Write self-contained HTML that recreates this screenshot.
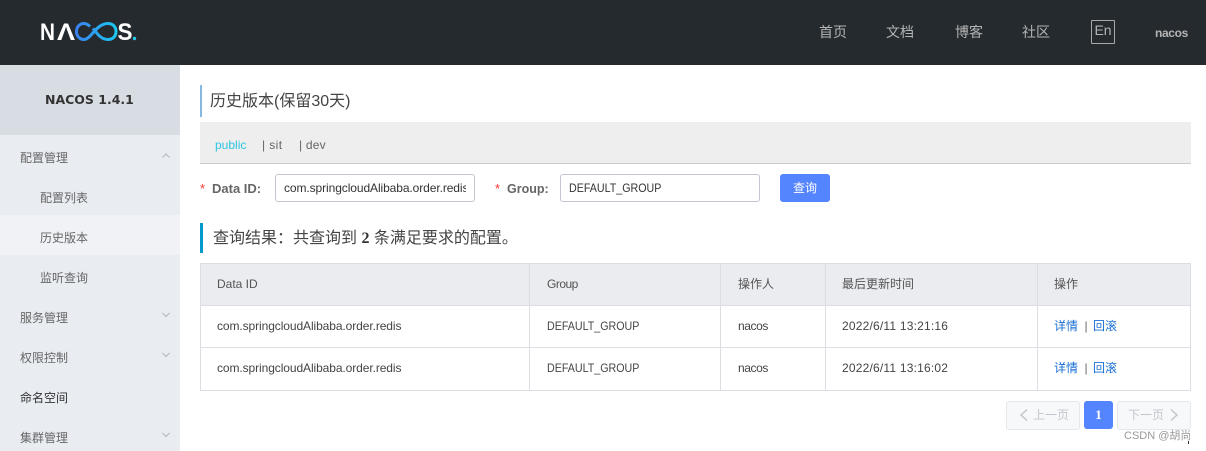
<!DOCTYPE html>
<html><head><meta charset="utf-8"><style>
html,body{margin:0;padding:0;width:1206px;height:451px;overflow:hidden;background:#fff}
body{position:relative;font-family:"Liberation Sans","Noto Sans CJK SC",sans-serif;font-size:12px;color:#666}
.a{position:absolute}
.t{position:absolute;white-space:nowrap;line-height:20px}
.cn{font-size:12px;color:#666}
.nav{font-size:14px;color:#b4b4b4;top:22px}
.dk{color:#444}
.ln{position:absolute;background:#dcdee3}
.link{color:#1a6fd4}
.sx{transform:scaleX(.89);transform-origin:0 50%}
.id{letter-spacing:-.09px}
</style></head><body>
<div class="a" style="left:0;top:0;width:1206px;height:65px;background:#252a2f"></div>
<svg class="a" style="left:36px;top:16px" width="110" height="32" viewBox="0 0 110 32">
<defs><linearGradient id="g" x1="0" x2="1" y1="0" y2="0"><stop offset="0" stop-color="#3b82f0"/><stop offset="1" stop-color="#1bc8f0"/></linearGradient></defs>
<text x="4" y="24" font-family="Liberation Sans" font-weight="700" font-size="24.500" fill="#fff" textLength="15" lengthAdjust="spacingAndGlyphs">N</text>
<text x="21" y="24" font-family="Liberation Sans" font-weight="700" font-size="24.500" fill="#fff" textLength="18" lengthAdjust="spacingAndGlyphs">Λ</text>
<path d="M54 10.500C52 8.500 50 7.500 48 7.500C43.500 7.500 40.500 11 40.500 15.500C40.500 20 43.500 23.500 48 23.500C55 23.500 60 7.500 72 7.500C77 7.500 80 11 80 15.500C80 20 77 23.500 72 23.500C65 23.500 62 18.500 57 12.500" fill="none" stroke="url(#g)" stroke-width="3"/>
<text x="81.500" y="24" font-family="Liberation Sans" font-weight="700" font-size="24.500" fill="#fff" textLength="15" lengthAdjust="spacingAndGlyphs">S</text>
<circle cx="98.500" cy="22.500" r="1.700" fill="#27c8e8"/>
</svg>
<div class="t nav" style="left:819px">首页</div>
<div class="t nav" style="left:886px">文档</div>
<div class="t nav" style="left:955px">博客</div>
<div class="t nav" style="left:1022px">社区</div>
<div class="a" style="left:1091px;top:20px;width:22px;height:22px;border:1px solid #a8a8a8;border-radius:1px;color:#b4b4b4;font-size:14px;line-height:19px;text-align:center">En</div>
<div class="t" style="left:1155px;top:23px;color:#b4b4b4;font-size:12px;font-weight:700;letter-spacing:-.35px">nacos</div>

<div class="a" style="left:0;top:65px;width:180px;height:386px;background:#e9ecf1"></div>
<div class="a" style="left:0;top:65px;width:180px;height:70px;background:#d8dde4"></div>
<div class="t" style="left:45px;top:90px;font-family:'DejaVu Sans';font-weight:700;font-size:12.500px;color:#333">NACOS 1.4.1</div>
<div class="a" style="left:0;top:215px;width:180px;height:40px;background:#f0f2f6"></div>
<div class="t cn" style="left:20px;top:148px">配置管理</div>
<div class="t cn" style="left:40px;top:188px">配置列表</div>
<div class="t cn" style="left:40px;top:228px">历史版本</div>
<div class="t cn" style="left:40px;top:268px">监听查询</div>
<div class="t cn" style="left:20px;top:308px">服务管理</div>
<div class="t cn" style="left:20px;top:348px">权限控制</div>
<div class="t cn" style="left:20px;top:388px;color:#333">命名空间</div>
<div class="t cn" style="left:20px;top:428px">集群管理</div>
<svg class="a" style="left:0;top:140px" width="180" height="311" fill="none" stroke="#b0b5bd" stroke-width="1">
<path d="M162.500 17.500L166 14L169.500 17.500"/>
<path d="M162.500 173L166 176.500L169.500 173"/>
<path d="M162.500 213L166 216.500L169.500 213"/>
<path d="M162.500 293L166 296.500L169.500 293"/>
</svg>

<div class="a" style="left:200px;top:85px;width:2px;height:32px;background:#88b7e0"></div>
<div class="t" style="left:210px;top:92px;font-size:16px;color:#444">历史版本(保留30天)</div>
<div class="a" style="left:200px;top:122px;width:991px;height:41px;background:#eee;border-bottom:1px solid #ccc"></div>
<div class="t" style="left:215px;top:135px;color:#2cc3e0">public</div>
<div class="t" style="left:262px;top:135px;color:#666;letter-spacing:.4px">| sit</div>
<div class="t" style="left:299px;top:135px;color:#666;letter-spacing:.2px">| dev</div>

<div class="t" style="left:200px;top:179px;color:#f33;font-size:13px">*</div>
<div class="t" style="left:212px;top:179px;font-weight:700;color:#666;font-size:13px">Data ID:</div>
<div class="a" style="left:275px;top:174px;width:198px;height:26px;border:1px solid #c4c6cf;border-radius:3px;background:#fff"></div>
<div class="a id" style="left:284px;top:175px;width:182px;height:26px;overflow:hidden;line-height:26px;white-space:nowrap;color:#333">com.springcloudAlibaba.order.redis</div>
<div class="t" style="left:495px;top:179px;color:#f33;font-size:13px">*</div>
<div class="t" style="left:507px;top:179px;font-weight:700;color:#666;font-size:12.500px">Group:</div>
<div class="a" style="left:560px;top:174px;width:198px;height:26px;border:1px solid #c4c6cf;border-radius:3px;background:#fff"></div>
<div class="t sx" style="left:569px;top:178px;color:#333">DEFAULT_GROUP</div>
<div class="a" style="left:780px;top:174px;width:50px;height:28px;background:#5584ff;border-radius:3px;color:#fff;text-align:center;line-height:28px">查询</div>

<div class="a" style="left:200px;top:223px;width:3px;height:30px;background:#09c"></div>
<div class="t" style="left:213px;top:229px;font-size:16px;color:#444">查询结果：共查询到 <b style="font-family:'Liberation Serif';font-size:16px;color:#333">2</b> 条满足要求的配置。</div>

<div class="a" style="left:200px;top:263px;width:991px;height:42px;background:#ebecf0"></div>
<div class="ln" style="left:200px;top:263px;width:991px;height:1px"></div>
<div class="ln" style="left:200px;top:305px;width:991px;height:1px"></div>
<div class="ln" style="left:200px;top:347px;width:991px;height:1px"></div>
<div class="ln" style="left:200px;top:390px;width:991px;height:1px"></div>
<div class="ln" style="left:200px;top:263px;width:1px;height:128px"></div>
<div class="ln" style="left:529px;top:263px;width:1px;height:128px"></div>
<div class="ln" style="left:720px;top:263px;width:1px;height:128px"></div>
<div class="ln" style="left:825px;top:263px;width:1px;height:128px"></div>
<div class="ln" style="left:1037px;top:263px;width:1px;height:128px"></div>
<div class="ln" style="left:1190px;top:263px;width:1px;height:128px"></div>

<div class="t" style="left:217px;top:274px;color:#555">Data ID</div>
<div class="t" style="left:547px;top:274px;color:#555;letter-spacing:-.5px">Group</div>
<div class="t" style="left:738px;top:274px;color:#555">操作人</div>
<div class="t" style="left:842px;top:274px;color:#555">最后更新时间</div>
<div class="t" style="left:1054px;top:274px;color:#555">操作</div>

<div class="t dk id" style="left:217px;top:316px">com.springcloudAlibaba.order.redis</div>
<div class="t dk sx" style="left:547px;top:316px">DEFAULT_GROUP</div>
<div class="t dk" style="left:738px;top:316px;letter-spacing:-.4px">nacos</div>
<div class="t dk" style="left:842px;top:316px;letter-spacing:.2px">2022/6/11 13:21:16</div>
<div class="t" style="left:1054px;top:316px"><span class="link">详情</span><span class="a" style="left:30.500px;color:#666">|</span><span class="link a" style="left:39px">回滚</span></div>

<div class="t dk id" style="left:217px;top:358px">com.springcloudAlibaba.order.redis</div>
<div class="t dk sx" style="left:547px;top:358px">DEFAULT_GROUP</div>
<div class="t dk" style="left:738px;top:358px;letter-spacing:-.4px">nacos</div>
<div class="t dk" style="left:842px;top:358px;letter-spacing:.2px">2022/6/11 13:16:02</div>
<div class="t" style="left:1054px;top:358px"><span class="link">详情</span><span class="a" style="left:30.500px;color:#666">|</span><span class="link a" style="left:39px">回滚</span></div>

<div class="a" style="left:1006px;top:401px;width:72px;height:27px;border:1px solid #e6e7eb;border-radius:3px;background:#f7f8fa"></div>
<div class="t" style="left:1033px;top:405px;color:#c4c6cf">上一页</div>
<div class="a" style="left:1084px;top:401px;width:29px;height:28px;background:#5584ff;border-radius:3px;color:#fff;text-align:center;line-height:28px;font-family:'Liberation Serif';font-weight:700;font-size:13px">1</div>
<div class="a" style="left:1117px;top:401px;width:72px;height:27px;border:1px solid #e6e7eb;border-radius:3px;background:#f7f8fa"></div>
<div class="t" style="left:1128px;top:405px;color:#c4c6cf">下一页</div>
<svg class="a" style="left:1006px;top:401px" width="186" height="28" fill="none" stroke="#c4c6cf" stroke-width="1.500">
<path d="M21 8.500L15 14L21 19.500"/><path d="M165 8.500L171 14L165 19.500"/>
</svg>
<div class="t" style="left:1124px;top:426px;color:#999;font-size:11px">CSDN @胡尚</div>
<div class="a" style="left:1188px;top:441px;width:1px;height:3px;background:#333"></div>
</body></html>
